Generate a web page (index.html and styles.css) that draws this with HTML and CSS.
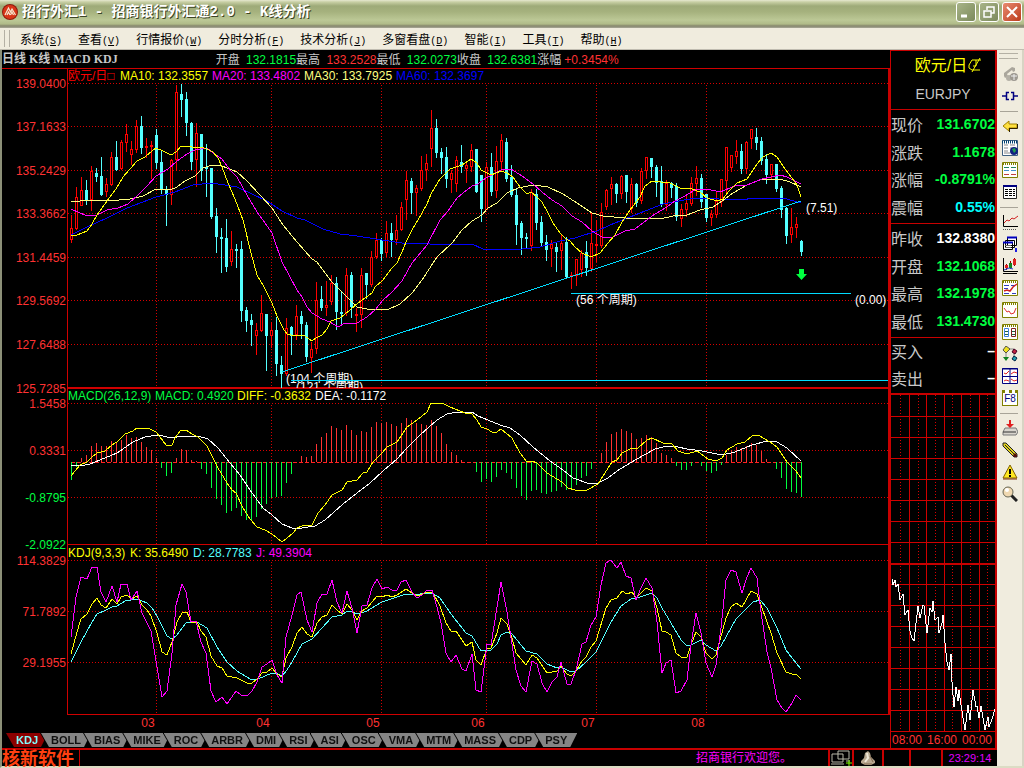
FILE: index.html
```html
<!DOCTYPE html>
<html lang="zh-CN">

<head>
  <meta charset="UTF-8">
  <meta name="viewport" content="width=device-width, initial-scale=1.0">
  <title>招行外汇1 - 招商银行外汇通2.0 - K线分析</title>
  <link rel="stylesheet" href="styles.css">
</head>

<body>
  <header class="titlebar">
    <svg class="app-logo" viewBox="0 0 16 16" width="16" height="16">
      <circle cx="8" cy="8" r="8" fill="#8c1a0c"/>
      <circle cx="8" cy="8" r="7" fill="#d83418"/>
      <path d="M3 11L6.500 4l2 4L10 5l3.500 6M5 11l1.500-3 1.500 3M8.500 11L10 8l1.500 3" fill="none" stroke="#f4e8d0" stroke-width="1.200"/>
    </svg>
    <h1>招行外汇1 - 招商银行外汇通2.0 - K线分析</h1>
    <div class="win-buttons">
      <button type="button" aria-label="最小化"><svg viewBox="0 0 16 16" width="16" height="16"><path d="M3 12h6" stroke="#fff" stroke-width="3"/></svg></button>
      <button type="button" aria-label="还原"><svg viewBox="0 0 16 16" width="16" height="16"><path d="M6 6V3h7v6h-3M3 7h7v6H3z" fill="none" stroke="#fff" stroke-width="1.500"/></svg></button>
      <button type="button" class="close" aria-label="关闭"><svg viewBox="0 0 16 16" width="16" height="16"><path d="M3 3l10 10M13 3L3 13" stroke="#fff" stroke-width="2"/></svg></button>
    </div>
  </header>

  <nav class="menubar">
    <span class="grip"></span>
    <button type="button">系统<span>(<u>S</u>)</span></button>
    <button type="button">查看<span>(<u>V</u>)</span></button>
    <button type="button">行情报价<span>(<u>W</u>)</span></button>
    <button type="button">分时分析<span>(<u>F</u>)</span></button>
    <button type="button">技术分析<span>(<u>J</u>)</span></button>
    <button type="button">多窗看盘<span>(<u>D</u>)</span></button>
    <button type="button">智能<span>(<u>I</u>)</span></button>
    <button type="button">工具<span>(<u>T</u>)</span></button>
    <button type="button">帮助<span>(<u>H</u>)</span></button>
  </nav>

  <div class="workspace">
    <div class="terminal">
      <main class="charts">
        <div class="infoline">
          <strong>日线 K线 MACD KDJ</strong>
          <p>开盘 <b class="green">132.1815</b>最高 <b class="red">133.2528</b>最低 <b class="green">132.0273</b>收盘 <b class="green">132.6381</b>涨幅<b class="red">+0.3454%</b></p>
        </div>
        <svg id="price" class="panel" viewBox="2 68 888 320"></svg>
        <svg id="macd" class="panel" viewBox="2 388 888 157"></svg>
        <svg id="kdj" class="panel" viewBox="2 545 888 188"></svg>
        <ul class="tabs">
          <li><button type="button" class="active">KDJ</button></li>
          <li><button type="button">BOLL</button></li>
          <li><button type="button">BIAS</button></li>
          <li><button type="button">MIKE</button></li>
          <li><button type="button">ROC</button></li>
          <li><button type="button">ARBR</button></li>
          <li><button type="button">DMI</button></li>
          <li><button type="button">RSI</button></li>
          <li><button type="button">ASI</button></li>
          <li><button type="button">OSC</button></li>
          <li><button type="button">VMA</button></li>
          <li><button type="button">MTM</button></li>
          <li><button type="button">MASS</button></li>
          <li><button type="button">CDP</button></li>
          <li><button type="button">PSY</button></li>
        </ul>
      </main>

      <aside class="quote">
        <div class="symbol">
          <h2>欧元/日<svg viewBox="0 0 16 16" width="16" height="16"><path d="M14 3H5L2 8v3l3 2h8M13 1L5 15M9 3v6H6" fill="none" stroke="#ffff00"/></svg></h2>
          <p>EURJPY</p>
        </div>
        <dl>
          <div><dt>现价</dt><dd class="green">131.6702</dd></div>
          <div><dt>涨跌</dt><dd class="green">1.1678</dd></div>
          <div><dt>涨幅</dt><dd class="green">-0.8791%</dd></div>
          <div><dt>震幅</dt><dd class="cyan">0.55%</dd></div>
        </dl>
        <dl>
          <div><dt>昨收</dt><dd>132.8380</dd></div>
          <div><dt>开盘</dt><dd class="green">132.1068</dd></div>
          <div><dt>最高</dt><dd class="green">132.1978</dd></div>
          <div><dt>最低</dt><dd class="green">131.4730</dd></div>
        </dl>
        <dl class="deal">
          <div><dt>买入</dt><dd>–</dd></div>
          <div><dt>卖出</dt><dd>–</dd></div>
        </dl>
        <svg id="ticks" class="panel" viewBox="891 393 104 355"></svg>
      </aside>

      <footer class="statusbar">
        <span class="brand">核新软件</span>
        <span class="welcome">招商银行欢迎您。</span>
        <span class="cell net">
          <svg viewBox="0 0 22 16" width="22" height="16"><path d="M8 1h11v8H8zM2 4h11v8H2zM1 14h13M16 11h4" fill="#000" stroke="#b8b8a8"/><path d="M16 13h6M19 10v6" stroke="#80ff00"/></svg>
        </span>
        <span class="cell bell">
          <svg viewBox="0 0 16 16" width="16" height="16"><path d="M8 1l2 2 1 4 4 4v2l-4 2H5l-4-2v-2l3-3 1-5z" fill="#b8a890"/><path d="M7 3l1 5-3 4" stroke="#f0e8d8" fill="none" stroke-width="2"/><path d="M10 6l3 6M4 14h8" stroke="#806850" fill="none"/></svg>
        </span>
        <span class="cell narrow"></span>
        <span class="cell mid"></span>
        <time class="cell clock">23:29:14</time>
      </footer>
    </div>

    <div class="toolbar">
      <span class="grip"></span>
      <button type="button" aria-label="电话"><svg viewBox="0 0 16 16"><path d="M2 7l8-6 3 1v3l-2 1-1-2-5 4 1 2-3 2-1-2z" fill="#aaa69c"/><circle cx="7" cy="12" r="3" fill="#b4b0a6"/><circle cx="12" cy="11" r="4" fill="#9c9890"/><path d="M9 10h6M12 8v6" stroke="#eee"/></svg></button>
      <button type="button" aria-label="连接"><svg viewBox="0 0 16 16"><path d="M0 8h4M12 8h4M7 4.500H4.500v7H7M9 4.500h2.500v7H9" fill="none" stroke="#000080" stroke-width="1.500"/></svg></button>
      <hr>
      <button type="button" aria-label="返回"><svg viewBox="0 0 16 16"><path d="M1 8l6-5v3h8v4H7v3z" fill="#ffe040" stroke="#a08000"/><path d="M7 10.500h8.500V6M7.500 14v-3" fill="none" stroke="#302000"/></svg></button>
      <button type="button" aria-label="全球报价"><svg viewBox="0 0 16 16"><path d="M.5.5h15v15H.5z" fill="#fff" stroke="#406080"/><path d="M0 2h16" stroke="#004070" stroke-width="3" stroke-dasharray="1 1"/><path d="M2 5h4M8 5h5M2 8h4M8 8h2M2 11h4M2 13h6" stroke="#888"/><circle cx="12" cy="11" r="4" fill="#102080"/><path d="M10 9l3-1 1 3-2 2z" fill="#20a050"/></svg></button>
      <button type="button" aria-label="报价列表"><svg viewBox="0 0 16 16"><path d="M.5.5h15v15H.5z" fill="#fff" stroke="#808000"/><path d="M1 2h14" stroke="#808000" stroke-width="2" stroke-dasharray="1 1"/><path d="M2 5.500h5M9 5.500h5" stroke="#208060"/><path d="M2 8.500h5M9 8.500h5" stroke="#4090d0"/><path d="M2 12.500h5M9 12.500h5" stroke="#c04040"/></svg></button>
      <button type="button" aria-label="表格"><svg viewBox="0 0 16 16"><path d="M1.500 2h13v12.500h-13z" fill="#fff" stroke="#222"/><path d="M1 2h14" stroke="#000080" stroke-width="2"/><path d="M3 5.500h10M3 7.500h10M3 9.500h10M3 11.500h10" stroke="#000" stroke-dasharray="3 1"/></svg></button>
      <hr>
      <button type="button" aria-label="分时"><svg viewBox="0 0 16 16"><path d="M1.500 1v11.500H16" fill="none" stroke="#000"/><path d="M2 9l3-3 2 1 3-3 2 1 4-3" fill="none" stroke="#d02020"/><path d="M1 15.500h14" stroke="#555" stroke-dasharray="1 1"/></svg></button>
      <button type="button" aria-label="多窗"><svg viewBox="0 0 16 16"><path d="M5.500 1.500h9v8h-9zM3.500 4.500h9v7h-9zM1.500 6.500h9v7h-9z" fill="#fff" stroke="#000"/><path d="M5 1.500h10M1 6.500h10" stroke="#0000c0" stroke-width="2"/><path d="M3 9.500h6M3 11.500h6" stroke="#666"/><path d="M14 12v4" stroke="#2020e0" stroke-width="2"/></svg></button>
      <button type="button" aria-label="K线"><svg viewBox="0 0 16 16"><path d="M1.500 0v13.500H16M1 15.500h14" fill="none" stroke="#000"/><path d="M4.500 6v6M8.500 3v8M12.500 0v8" stroke="#800"/><path d="M4.500 7v3M12.500 1v6" stroke="#e02020" stroke-width="3"/><path d="M8.500 5v5" stroke="#108020" stroke-width="3"/><path d="M2 12l5-2 4 1" stroke="#2040d0" fill="none"/></svg></button>
      <button type="button" aria-label="综合"><svg viewBox="0 0 16 16"><path d="M.5.5h15v15H.5z" fill="#fff" stroke="#808000"/><path d="M1 2h14" stroke="#808000" stroke-width="2" stroke-dasharray="1 1"/><path d="M2 5.500h5M9 5.500h4M2 8.500h4M2 13.500h5M10 13.500h4" stroke="#3040c0"/><path d="M2 11l3-1 3 1 3-4 4-3" fill="none" stroke="#d02020" stroke-width="1.500"/></svg></button>
      <button type="button" aria-label="走势"><svg viewBox="0 0 16 16"><path d="M.5.5h15v15H.5z" fill="#fff" stroke="#808000"/><path d="M1 2h14" stroke="#808000" stroke-width="2" stroke-dasharray="1 1"/><path d="M2 6l3 4 2-1 2 3 3-1 2-5" fill="none" stroke="#e03030"/></svg></button>
      <button type="button" aria-label="对比"><svg viewBox="0 0 16 16"><path d="M.5.5h15v15H.5z" fill="#fff" stroke="#808000"/><path d="M1 2h14" stroke="#808000" stroke-width="2" stroke-dasharray="1 1"/><path d="M2.500 4.500h4v8h-4z" fill="#fff" stroke="#4080e0"/><path d="M9.500 4.500h4v8h-4z" fill="#fff" stroke="#802020"/><path d="M3 7.500h3M3 10.500h3M10 7.500h3M10 10.500h3" stroke="#206040"/></svg></button>
      <button type="button" aria-label="指标"><svg viewBox="0 0 16 16"><path d="M5 3h7v9M4 6v7" fill="none" stroke="#888"/><path d="M4 0l4 3-4 4-3-3z" fill="#f0e020" stroke="#554"/><path d="M12 3l3 2-2 3-3-2z" fill="#c02040" stroke="#402"/><path d="M12 10l3 2-2 3-3-2z" fill="#20a0b0" stroke="#024"/><path d="M1 11h6l-3 4z" fill="#108020"/></svg></button>
      <button type="button" aria-label="四窗"><svg viewBox="0 0 16 16"><path d="M.5.5h15v15H.5z" fill="#fff" stroke="#000080"/><path d="M0 1h16M8 0v16M0 8.500h16" stroke="#000080"/><path d="M2 5l2 1 3-3M9 6l3-2 3 1M2 13l2-1 3 1M9 11l3 2 3-1" fill="none" stroke="#e02020"/></svg></button>
      <button type="button" class="key">F8</button>
      <hr>
      <button type="button" aria-label="下载"><svg viewBox="0 0 16 16"><path d="M3 8L1 12v3h13l2-3-2-4z" fill="#d8d4cc" stroke="#777"/><path d="M1 12h13" stroke="#333"/><path d="M8 0v4" stroke="#e02020" stroke-width="2"/><path d="M4 4h8L8 8z" fill="#e02020"/></svg></button>
      <button type="button" aria-label="画线"><svg viewBox="0 0 16 16"><path d="M1 1h3l11 11v3h-3L1 4z" fill="#e0d020" stroke="#222"/><path d="M3 3l10 10" stroke="#222"/><path d="M11 13l2-2 2 2v2h-3z" fill="#501010"/></svg></button>
      <button type="button" aria-label="预警"><svg viewBox="0 0 16 16"><path d="M8 1l7 13H1z" fill="#ffe820" stroke="#806000"/><path d="M1 15h14" stroke="#803000"/><path d="M8 5v5M8 11v2" stroke="#000" stroke-width="2"/></svg></button>
      <button type="button" aria-label="查找"><svg viewBox="0 0 16 16"><path d="M9 9l6 6" stroke="#222" stroke-width="3"/><circle cx="6" cy="6" r="5" fill="#f0d8b0" stroke="#665"/><circle cx="5" cy="4" r="2" fill="#fff"/></svg></button>
    </div>
  </div>

  <script src="chart.js"></script>
</body>

</html>
```
FILE: styles.css
```css
* {
  box-sizing: border-box;
}

body {
  margin: 0;
  min-height: 100vh;
  display: flex;
  flex-direction: column;
  background: #ece9dc;
  font-family: "Liberation Sans", "Noto Sans CJK SC", sans-serif;
  font-size: 12px;
}

h1, h2, p, dl, dd, ul {
  margin: 0;
  padding: 0;
}

button {
  margin: 0;
  padding: 0;
  border: 0;
  background: none;
  font: inherit;
}

.green { color: #00ff40; }
.red { color: #ff3232; }
.cyan { color: #00ffff; }

/* title */
.titlebar {
  display: flex;
  align-items: center;
  gap: 4px;
  height: 28px;
  padding: 0 2px 4px 2px;
  background: linear-gradient(#e6e8d0 0, #c8cfa4 2px, #9eaa78 6px, #a6b27e 12px, #bcc896 20px, #b0bb88 24px, #85866c 26px, #a9a898 28px);
}

.titlebar h1 {
  flex: 1;
  color: #fff;
  font: bold 14px/20px "Liberation Mono", "Noto Sans CJK SC", monospace;
  text-shadow: 1px 1px 0 #3c4424;
}

.app-logo {
  display: block;
}

.win-buttons {
  display: flex;
  gap: 3px;
}

.win-buttons button {
  width: 20px;
  height: 20px;
  padding: 1px;
  border: 1px solid #fff;
  border-radius: 3px;
  background: linear-gradient(135deg, #a8b488, #7c8a5c);
}

.win-buttons svg {
  display: block;
}

.win-buttons .close {
  background: linear-gradient(135deg, #e88a70, #bc3c1c);
}

/* menu */
.menubar {
  display: flex;
  align-items: center;
  gap: 16px;
  height: 22px;
  padding-left: 4px;
  border-bottom: 1px solid #c0bcb0;
  background: #f0ecde;
  font-family: "Noto Sans CJK SC", sans-serif;
}

.menubar span {
  font: 10px "Liberation Mono", monospace;
}

.menubar .grip {
  width: 6px;
  height: 17px;
  margin-right: -6px;
  border: solid #b4b0a4;
  border-width: 0 1px;
}

.workspace {
  flex: 1;
  display: flex;
  border-left: 2px solid #8c9078;
  border-bottom: 2px solid #dcdcc4;
}

.terminal {
  flex: 1;
  min-width: 0;
  display: grid;
  grid-template-columns: minmax(0, 1fr) 107px;
  grid-template-rows: 1fr auto;
  background: #000;
  color: #c8c8c8;
}

.panel {
  display: block;
  width: 100%;
  overflow: visible;
  font-size: 12px;
}

.infoline {
  display: flex;
  gap: 98px;
  height: 18px;
  line-height: 20px;
  white-space: nowrap;
}

.infoline strong {
  font: bold 12px/18px "Liberation Serif", "Noto Sans CJK SC", serif;
}

.infoline b {
  margin-left: 3px;
  font-weight: normal;
}

/* indicator tabs */
.tabs {
  display: flex;
  height: 15px;
  padding-left: 4px;
  list-style: none;
}

.tabs li {
  margin-right: -7px;
  filter: drop-shadow(-1px 0 0 #000);
}

.tabs button {
  display: block;
  height: 14px;
  padding: 0 10px;
  background: #858585;
  color: #101010;
  font-weight: bold;
  font-size: 11px;
  line-height: 14px;
  clip-path: polygon(0 0, 100% 0, calc(100% - 7px) 100%, 8px 100%);
}

.tabs .active {
  background: #8c0000;
  color: #80ffff;
}

/* quote column */
.quote {
  border: solid #c80000;
  border-width: 1px 2px 0 1px;
}

.symbol {
  height: 59px;
  padding-top: 3px;
  border-bottom: 1px solid #c80000;
  text-align: center;
}

.symbol h2 {
  padding-left: 12px;
  color: #ffff00;
  font: 16px/24px "Liberation Sans", "Noto Sans CJK SC", sans-serif;
}

.symbol h2 svg {
  vertical-align: -2px;
}

.symbol p {
  font-size: 14px;
  line-height: 32px;
}

.quote dl {
  display: grid;
  grid-auto-rows: 1fr;
  height: 114px;
  padding-bottom: 2px;
  border-bottom: 1px solid #c80000;
}

.quote .deal {
  height: 55px;
  border-bottom: 0;
}

.quote dl div {
  display: flex;
  justify-content: space-between;
  align-items: center;
}

.quote dt {
  font: 16px/24px "Noto Sans CJK SC", sans-serif;
}

.quote dd {
  color: #fff;
  font-weight: bold;
  font-size: 14px;
}

.quote dd.green { color: #00ff40; }
.quote dd.cyan { color: #00ffff; }

/* status */
.statusbar {
  grid-column: 1 / -1;
  display: flex;
  height: 18px;
  border-top: 2px solid #c80000;
  line-height: 16px;
}

.brand {
  width: 78px;
  border-right: 1px solid #c80000;
  color: #ff4010;
  font: bold 18px/15px "Noto Sans CJK SC", sans-serif;
}

.welcome {
  flex: 1;
  padding-right: 36px;
  color: #ff00ff;
  text-align: right;
}

.cell {
  border-left: 2px solid #c80000;
  text-align: center;
}

.net { width: 24px; }
.bell { width: 30px; }
.narrow { width: 27px; }
.mid { width: 32px; }

.clock {
  width: 56px;
  color: #e000ff;
  font-size: 11px;
}

/* right toolbar */
.toolbar {
  width: 27px;
  padding: 3px 4px 0 2px;
  border-right: 2px solid #d8d4c4;
  background: #f0ecde;
}

.toolbar .grip {
  display: block;
  height: 6px;
  margin-bottom: 4px;
  border: solid #b4b0a4;
  border-width: 1px 0;
}

.toolbar button {
  display: block;
  width: 22px;
  height: 22px;
  padding: 3px;
}

.toolbar svg {
  display: block;
  width: 16px;
  height: 16px;
}

.toolbar hr {
  height: 8px;
  margin: 0;
  border: 0;
  background: linear-gradient(#a8a498, #a8a498) center / 18px 1px no-repeat;
}

.toolbar .key {
  width: 16px;
  height: 16px;
  margin: 3px;
  padding: 0;
  border: 1px solid #808000;
  border-top: 3px dotted #808000;
  background: #fff;
  color: #000080;
  font-size: 10px;
  line-height: 12px;
}

/* chart strokes */
.panel path,
.panel line,
.panel polyline {
  fill: none;
  shape-rendering: crispEdges;
}

.frame { stroke: #d00000; }
.thick { stroke: #c80000; stroke-width: 2; }
.dots { stroke: #d80000; stroke-dasharray: 1 2; }
.dash { stroke: #ff2020; stroke-dasharray: 4 2; }
.panel .up { stroke: #ff0000; fill: #000; shape-rendering: crispEdges; }
.panel .down { stroke: #54ffff; fill: #54ffff; shape-rendering: crispEdges; }
.bar-up { stroke: #ff3232; }
.bar-down { stroke: #00ff40; }
.trend { stroke: #00dcff; }
```
FILE: chart.js
```js
const NS = "http://www.w3.org/2000/svg";
const RED = "#ff3232", GREEN = "#00ff40", YELLOW = "#ffff00", PALE = "#ffff80";
const PINK = "#ff00ff", BLUE = "#0000ff", AQUA = "#54ffff", WHITE = "#ffffff";
const LEFT = 67.5, RIGHT = 888.5;
const months = [["03", 156], ["04", 271], ["05", 381], ["06", 486], ["07", 596], ["08", 706]];

function add(svg, tag, attrs, text) {
  const el = document.createElementNS(NS, tag);
  for (const key in attrs) el.setAttribute(key, attrs[key]);
  if (text) el.textContent = text;
  svg.appendChild(el);
  return el;
}

function hline(svg, y, cls, x1 = LEFT, x2 = RIGHT) {
  add(svg, "line", { x1, x2, y1: y, y2: y, class: cls });
}

function vline(svg, x, y1, y2, cls) {
  add(svg, "line", { x1: x, x2: x, y1, y2, class: cls });
}

function label(svg, x, y, text, fill, anchor = "start") {
  add(svg, "text", { x, y, fill, "text-anchor": anchor }, text);
}

function curve(svg, points, stroke) {
  add(svg, "polyline", { points, stroke });
}

function axes(svg, top, bottom, rows) {
  add(svg, "rect", { x: 68, y: top, width: 820, height: bottom - top, fill: "#000" });
  vline(svg, LEFT, top, bottom, "frame");
  vline(svg, RIGHT, top, bottom, "thick");
  hline(svg, bottom - 0.5, "frame");
  rows.forEach(([text, y, color]) => {
    hline(svg, y + 0.5, "dots");
    label(svg, 66, y + 5, text, color || RED, "end");
  });
  months.forEach(([, x]) => vline(svg, x + 0.5, rows[0][1] + 2, bottom, "dots"));
}

// high, body top, body bottom, low (thirds of a pixel from y = 80), 1 = rise
const candles = [
  [405,445,480,488,1],[321,352,447,450,1],[291,331,377,377,1],[300,330,360,374,0],[258,273,359,392,1],
  [264,279,290,305,0],[231,288,345,347,0],[294,312,335,350,1],[216,231,315,318,1],[182,231,270,272,0],
  [180,186,266,270,1],[132,162,188,215,1],[182,207,224,255,1],[120,138,209,220,1],[108,138,204,221,0],
  [174,198,203,233,1],[182,195,200,297,1],[147,165,248,266,0],[213,246,328,342,0],[318,327,345,437,0],
  [236,240,345,374,1],[15,37,239,272,1],[12,42,60,110,0],[36,57,129,167,0],[126,129,246,270,0],
  [129,159,241,320,1],[162,162,273,302,0],[192,262,266,350,0],[264,264,411,416,0],[383,408,471,518,0],
  [444,471,476,578,0],[417,474,561,575,0],[453,507,545,557,1],[492,507,510,563,0],[483,507,692,726,0],
  [681,690,722,755,0],[702,720,735,797,0],[729,750,767,824,1],[645,699,752,755,1],[702,702,768,872,0],
  [726,750,767,803,1],[711,750,852,887,0],[828,855,882,923,0],[714,744,881,887,1],[738,741,768,824,0],
  [675,708,764,779,1],[693,708,732,776,0],[726,735,831,845,0],[785,806,833,878,1],[606,660,806,821,1],
  [618,657,684,692,0],[603,675,684,707,1],[585,609,665,674,1],[591,609,696,749,0],[633,696,700,731,0],
  [563,584,698,707,1],[576,585,681,713,0],[684,702,707,755,1],[563,584,706,743,1],[579,579,614,656,0],
  [513,531,616,620,1],[459,479,532,537,1],[474,480,521,542,0],[423,459,520,530,1],[429,459,480,530,0],
  [405,450,480,494,1],[366,381,451,453,1],[273,300,359,420,1],[294,303,338,402,0],[315,324,338,407,1],
  [228,270,326,332,1],[222,249,271,303,1],[90,144,206,261,1],[117,144,218,233,0],[204,216,234,282,0],
  [201,231,297,323,0],[270,279,299,339,1],[228,240,311,335,1],[195,246,261,278,0],[246,255,266,308,1],
  [192,210,261,276,1],[207,207,336,338,0],[285,285,387,425,0],[245,261,389,390,1],[219,261,336,348,0],
  [198,243,332,353,1],[162,180,245,273,1],[174,186,297,305,0],[255,291,345,350,0],[324,345,435,494,0],
  [423,429,474,524,0],[459,471,474,503,0],[327,336,497,512,1],[327,342,429,449,0],[408,426,489,497,0],
  [465,486,510,542,0],[480,491,506,560,1],[489,501,516,575,0],[465,489,514,569,1],[471,486,590,596,0],
  [575,584,590,626,1],[537,537,587,617,1],[510,519,569,590,1],[483,516,563,587,0],[396,489,566,575,1],
  [420,492,496,545,1],[369,396,497,503,1],[327,331,380,389,1],[291,312,328,374,1],[309,312,341,368,0],
  [285,289,341,356,1],[285,285,336,368,0],[294,312,387,400,1],[309,312,369,380,0],[264,273,364,371,1],
  [231,231,272,297,1],[234,234,261,293,0],[255,261,309,350,0],[258,303,374,380,0],[300,309,376,392,1],
  [306,309,324,353,0],[309,318,410,422,0],[372,387,416,440,1],[345,370,389,412,1],[291,309,371,377,1],
  [258,294,311,348,1],[282,294,366,383,0],[342,342,413,425,0],[390,402,413,437,1],[336,362,404,413,1],
  [297,297,365,380,1],[201,201,302,345,1],[225,225,263,275,1],[180,213,231,251,1],[192,213,267,281,0],
  [183,187,266,281,1],[147,147,178,207,1],[144,171,189,209,0],[171,183,242,254,0],[222,237,285,311,0],
  [252,252,284,296,1],[252,252,326,335,0],[318,324,389,413,0],[381,384,468,491,0],[384,441,465,488,1],
  [411,432,443,473,1],[480,483,516,527,0]
];

function drawPrice() {
  const svg = document.getElementById("price");
  hline(svg, 68.5, "frame", 2, 890);
  axes(svg, 69, 388, [
    ["139.0400", 83], ["137.1633", 126], ["135.2429", 170], ["133.3662", 213],
    ["131.4459", 257], ["129.5692", 300], ["127.6488", 344]
  ]);
  label(svg, 66, 393, "125.7285", RED, "end");
  candles.forEach(([high, top, bottom, low, rise], i) => {
    const x = 71.5 + i * 5;
    const y = v => Math.round(80 + v / 3);
    const cls = rise ? "up" : "down";
    vline(svg, x, y(high), y(low), cls);
    add(svg, "rect", { x: x - 1, y: y(top) + 0.5, width: 2, height: Math.max(1, y(bottom) - y(top) - 1), class: cls });
  });
  curve(svg, "71,235 87,227 107,218 127,208 156,197 175,192 193,185 212,183 237,187 267,201 282,211 297,218 305,220 323,229 340,234 357,236 382,240 402,243 430,244 450,245 472,244 483,249 522,249 540,247 560,241 575,238 597,231 610,225 620,221 640,213 663,204 695,198 743,200 752,198 783,198 801,203", BLUE);
  curve(svg, "71,202 90,200 100,200 108,201 130,199 143,196 156,189 170,190 177,187 185,181 195,176 203,168 212,165 222,166 237,172 247,181 260,195 272,208 283,225 297,242 312,259 317,262 332,282 343,293 357,307 367,309 387,310 400,304 412,293 422,280 437,257 452,243 462,230 472,221 482,215 488,208 497,203 507,193 518,188 533,185 548,187 563,194 577,203 592,213 603,216 625,218 660,219 673,216 687,215 700,210 713,207 725,199 733,193 747,185 760,180 780,179 790,182 801,187", PALE);
  curve(svg, "71,209 87,216 97,215 107,210 118,208 128,204 138,195 147,186 156,176 168,169 177,161 187,154 195,150 207,148 213,153 222,159 230,170 237,177 247,195 257,212 265,223 272,233 282,262 297,290 302,297 307,307 312,313 322,319 330,322 338,327 345,323 357,323 367,317 375,310 383,300 392,292 402,281 412,263 427,245 440,220 448,211 457,198 463,193 472,186 478,184 486,178 501,170 511,169 522,176 533,184 542,192 552,200 562,206 572,216 582,222 592,231 602,237 608,238 613,237 625,231 635,229 647,220 655,214 667,207 675,201 685,196 695,190 707,189 720,192 735,186 747,185 762,179 780,175 787,177 801,184", PINK);
  curve(svg, "71,235 77,235 87,231 92,224 97,215 107,201 116,189 123,177 130,169 137,161 145,157 152,151 156,148 163,151 171,155 176,152 181,146 192,147 201,147 207,149 213,152 218,158 222,167 228,183 235,199 243,220 251,253 257,275 264,287 272,303 277,316 284,330 287,334 291,335 303,335 308,338 312,341 316,338 322,335 327,329 331,321 340,318 350,310 358,303 372,293 375,287 383,280 392,268 397,263 402,252 406,242 412,230 422,213 427,204 431,194 440,179 450,169 462,165 471,159 477,163 481,170 491,175 501,171 507,173 513,177 517,183 521,188 527,194 531,192 537,197 542,202 548,213 553,223 560,233 566,239 570,241 575,247 582,253 591,257 600,253 608,243 615,235 622,222 630,210 640,197 645,186 652,181 670,183 680,188 692,189 700,192 707,198 717,201 723,199 728,192 737,183 747,179 757,164 763,157 771,153 777,157 783,166 792,178 797,185 801,197", YELLOW);

  label(svg, 286, 383, "(104 个周期)", WHITE);
  label(svg, 296, 391, "(121 个周期)", WHITE);
  label(svg, 576, 304, "(56 个周期)", WHITE);
  label(svg, 806, 212, "(7.51)", WHITE);
  label(svg, 855, 304, "(0.00)", WHITE);
  add(svg, "line", { x1: 282, y1: 372, x2: 801, y2: 201, class: "trend" });
  hline(svg, 293.5, "trend", 571, 851);
  hline(svg, 380.5, "trend", 291, 888);
  add(svg, "polygon", { points: "799,269 804,269 804,274 807,274 801.5,280 796,274 799,274", fill: GREEN });

  label(svg, 68, 80, "欧元/日□", "#ff0000");
  label(svg, 120, 80, "MA10: 132.3557", YELLOW);
  label(svg, 212, 80, "MA20: 133.4802", PINK);
  label(svg, 304, 80, "MA30: 133.7925", PALE);
  label(svg, 396, 80, "MA60: 132.3697", BLUE);
}

// bar ends, thirds of a pixel from y = 385
const bars = [
  285,245,219,210,183,174,182,182,168,171,165,150,158,155,171,186,195,220,248,272,
  264,220,192,195,226,228,252,267,309,342,360,384,378,369,392,405,405,396,371,357,
  338,335,333,293,267,231,213,216,213,178,156,143,123,128,135,120,135,150,138,141,
  126,111,113,111,117,123,114,99,105,114,117,120,105,122,144,178,201,210,225,232,
  232,261,290,281,291,275,255,264,281,308,333,345,318,315,324,327,321,318,306,315,
  311,300,278,272,252,232,205,171,147,141,132,138,144,162,159,150,156,174,204,210,
  219,243,255,255,243,232,243,258,264,258,239,210,195,186,190,182,174,180,198,222,
  232,252,279,312,321,324,335
];

function drawMacd() {
  const svg = document.getElementById("macd");
  axes(svg, 388, 545, [["1.5458", 403], ["0.3331", 450], ["-0.8795", 497, GREEN]]);
  hline(svg, 388.5, "frame");
  label(svg, 66, 549, "-2.0922", GREEN, "end");
  hline(svg, 462.5, "dash", 71, 801);
  bars.forEach((end, i) => {
    const y = Math.round(385 + end / 3);
    vline(svg, 71.5 + i * 5, 462, y, y > 462 ? "bar-down" : "bar-up");
  });
  curve(svg, "71,465 80,466 90,464 100,460 117,453 133,442 145,437 158,435 172,438 183,436 198,436 208,439 218,448 230,463 240,475 250,490 263,508 272,515 282,524 292,528 302,528 315,526 325,520 343,504 357,493 370,483 383,471 397,459 407,448 420,435 437,420 447,414 457,412 472,412 478,416 488,420 500,425 510,428 520,435 533,447 550,461 563,470 573,478 587,483 598,483 608,478 620,469 637,459 655,449 667,446 678,447 687,449 702,451 722,455 735,452 752,445 767,441 777,442 787,448 801,461", WHITE);
  curve(svg, "71,476 80,465 87,462 92,457 97,453 105,451 112,445 117,442 125,434 133,431 137,428 148,428 156,432 160,437 166,445 172,445 175,438 181,430 186,430 192,434 198,437 207,446 212,456 218,468 227,483 232,490 236,493 243,508 250,519 257,527 265,530 272,534 282,542 287,538 293,533 297,528 302,526 312,525 318,513 325,505 332,495 342,490 347,482 357,480 363,473 367,472 373,462 382,453 387,447 397,442 407,427 417,420 427,412 431,403 442,403 450,407 455,409 465,413 472,414 477,420 481,427 487,429 492,432 497,432 501,429 512,438 520,453 527,462 532,461 537,463 547,473 562,482 568,488 575,490 587,490 598,484 603,476 612,462 617,460 622,453 632,448 638,448 647,440 652,438 663,443 672,444 678,451 687,454 697,451 708,459 716,461 722,458 727,450 737,444 745,442 752,436 758,435 770,442 777,447 787,462 796,471 801,478", YELLOW);
  label(svg, 68, 400, "MACD(26,12,9)", GREEN);
  label(svg, 155, 400, "MACD: 0.4920", GREEN);
  label(svg, 237, 400, "DIFF: -0.3632", YELLOW);
  label(svg, 315, 400, "DEA: -0.1172", WHITE);
}

function drawKdj() {
  const svg = document.getElementById("kdj");
  axes(svg, 545, 715, [["114.3829", 560], ["71.7892", 611], ["29.1955", 662]]);
  curve(svg, "71,662 81,642 92,622 97,614 106,610 112,607 117,606 125,601 137,599 147,603 152,608 157,616 167,636 172,639 177,635 186,623 197,622 207,628 217,647 227,662 237,671 250,679 258,679 272,673 278,674 282,676 287,670 292,662 302,644 312,639 322,628 332,617 342,615 347,611 352,612 357,614 367,611 382,602 397,597 406,594 420,594 432,593 440,598 451,614 466,633 472,636 481,651 491,650 497,644 501,635 507,632 512,634 526,651 537,654 547,664 557,668 561,667 569,671 576,671 586,662 596,652 611,622 621,606 631,599 637,598 652,593 657,598 662,608 671,623 681,640 687,646 691,645 701,640 706,645 716,651 721,646 726,637 736,619 747,608 753,602 760,600 767,608 777,628 786,650 792,658 801,669", AQUA);
  curve(svg, "71,654 77,632 81,619 87,614 92,604 97,598 101,605 106,608 112,599 117,604 121,597 127,595 132,599 137,596 142,605 147,610 151,616 157,633 162,652 167,655 172,642 177,622 182,613 187,612 191,622 197,622 201,631 206,637 211,656 217,666 222,668 227,676 237,678 247,683 252,683 257,679 262,673 267,672 272,668 277,674 282,677 286,658 292,647 297,633 302,627 307,634 312,637 317,623 322,617 327,615 332,605 337,610 342,614 347,604 352,610 357,620 362,611 367,608 377,596 382,597 387,595 392,597 397,595 406,589 412,593 418,596 427,592 433,593 440,606 446,623 451,631 456,631 466,646 472,642 476,660 481,665 487,648 491,648 497,633 501,618 507,624 512,638 516,653 526,665 532,655 537,658 547,673 557,671 561,666 567,674 571,676 576,671 582,661 586,657 591,647 596,641 606,608 611,600 617,598 622,591 627,594 632,592 636,598 646,588 652,591 657,608 662,631 666,632 671,635 676,653 681,657 687,657 691,645 696,632 701,637 706,653 712,659 716,655 726,618 731,607 736,603 742,607 751,591 757,594 761,605 767,622 771,633 777,653 786,672 792,674 796,674 801,679", YELLOW);
  curve(svg, "71,637 76,597 81,577 87,579 92,567 97,567 101,592 106,602 112,586 117,602 121,584 127,584 131,600 137,591 142,613 147,623 151,631 157,667 162,697 167,691 172,653 176,605 182,584 186,592 191,622 196,621 201,642 206,653 211,691 216,702 222,697 227,704 236,691 241,695 247,696 252,691 257,682 262,667 267,664 272,660 277,675 282,683 286,637 292,615 297,595 301,592 307,620 312,632 317,603 322,594 327,594 332,580 337,602 342,613 347,591 352,608 357,633 362,606 367,605 372,588 377,579 382,589 387,587 392,590 397,590 401,582 406,580 412,592 417,598 422,595 427,590 432,590 437,607 441,623 446,653 451,662 456,655 462,669 466,671 472,654 476,690 481,692 487,644 491,645 501,582 507,612 516,670 521,686 526,692 532,661 537,664 542,683 547,692 552,682 557,677 561,662 567,684 571,684 576,670 582,644 586,642 591,625 596,617 601,585 606,563 611,560 617,568 621,562 626,576 631,578 636,600 641,588 646,578 652,588 657,622 662,673 666,663 671,660 676,693 681,691 687,680 691,645 696,613 701,633 706,663 712,677 716,665 721,628 726,580 731,570 736,572 742,593 747,577 751,568 757,578 761,612 767,652 771,668 777,700 782,708 786,712 792,703 796,695 801,700", PINK);
  label(svg, 68, 557, "KDJ(9,3,3)", YELLOW);
  label(svg, 130, 557, "K: 35.6490", YELLOW);
  label(svg, 193, 557, "D: 28.7783", AQUA);
  label(svg, 256, 557, "J: 49.3904", PINK);
  months.forEach(([text, x]) => label(svg, x - 8, 727, text, RED, "middle"));
}

function drawTicks() {
  const svg = document.getElementById("ticks");
  for (let y = 416.5; y < 731; y += 21) hline(svg, y, "frame", 891, 995);
  [909, 926, 944, 961, 979].forEach(x => vline(svg, x + 0.5, 395, 731, "frame"));
  [900, 918, 935, 952, 970, 987].forEach(x => vline(svg, x + 0.5, 395, 731, "dots"));
  hline(svg, 394, "thick", 891, 995);
  hline(svg, 564, "thick", 891, 995);
  hline(svg, 731.5, "frame", 891, 995);
  curve(svg, "892,579 893,585 895,580 896,587 898,584 900,600 903,594 905,615 908,610 910,631 912,638 914,641 918,606 920,618 923,605 924,606 927,633 930,608 932,612 933,601 935,620 938,617 939,633 942,623 943,615 945,643 947,662 949,670 951,654 952,682 954,707 956,687 958,701 959,690 961,705 965,730 968,705 970,720 973,690 976,707 977,706 979,718 981,706 985,730 988,717 989,727 992,719 995,709", WHITE);
  label(svg, 892, 744, "08:00", RED);
  label(svg, 927, 744, "16:00", RED);
  label(svg, 962, 744, "00:00", RED);
}

drawPrice();
drawMacd();
drawKdj();
drawTicks();
```
